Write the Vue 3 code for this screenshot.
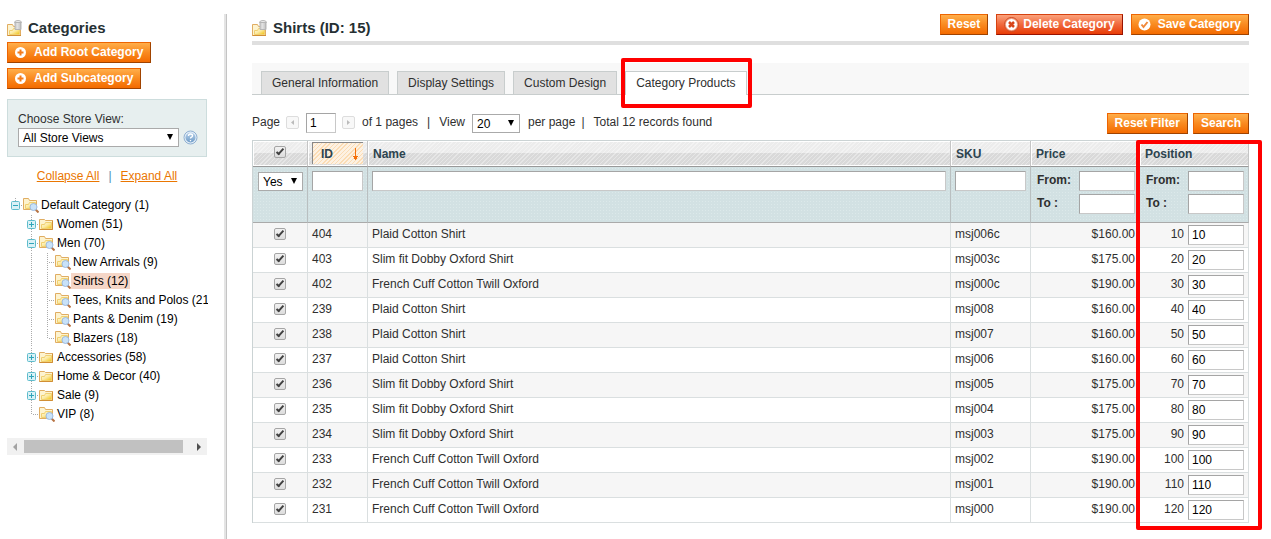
<script setup>
import { ref } from 'vue'

const tree = [
  { name: 'Default Category (1)', level: 0, icon: 'search', toggle: 'minus', root: true },
  { name: 'Women (51)', level: 1, icon: 'folder', toggle: 'plus' },
  { name: 'Men (70)', level: 1, icon: 'search', toggle: 'minus' },
  { name: 'New Arrivals (9)', level: 2, icon: 'search' },
  { name: 'Shirts (12)', level: 2, icon: 'search', selected: true },
  { name: 'Tees, Knits and Polos (21)', level: 2, icon: 'search' },
  { name: 'Pants & Denim (19)', level: 2, icon: 'search' },
  { name: 'Blazers (18)', level: 2, icon: 'search', last: true },
  { name: 'Accessories (58)', level: 1, icon: 'folder', toggle: 'plus' },
  { name: 'Home & Decor (40)', level: 1, icon: 'folder', toggle: 'plus' },
  { name: 'Sale (9)', level: 1, icon: 'folder', toggle: 'plus' },
  { name: 'VIP (8)', level: 1, icon: 'search', last: true }
]

const tabs = ['General Information', 'Display Settings', 'Custom Design', 'Category Products']
const activeTab = ref('Category Products')

const products = ref([
  { id: 404, name: 'Plaid Cotton Shirt', sku: 'msj006c', price: '$160.00', position: 10 },
  { id: 403, name: 'Slim fit Dobby Oxford Shirt', sku: 'msj003c', price: '$175.00', position: 20 },
  { id: 402, name: 'French Cuff Cotton Twill Oxford', sku: 'msj000c', price: '$190.00', position: 30 },
  { id: 239, name: 'Plaid Cotton Shirt', sku: 'msj008', price: '$160.00', position: 40 },
  { id: 238, name: 'Plaid Cotton Shirt', sku: 'msj007', price: '$160.00', position: 50 },
  { id: 237, name: 'Plaid Cotton Shirt', sku: 'msj006', price: '$160.00', position: 60 },
  { id: 236, name: 'Slim fit Dobby Oxford Shirt', sku: 'msj005', price: '$175.00', position: 70 },
  { id: 235, name: 'Slim fit Dobby Oxford Shirt', sku: 'msj004', price: '$175.00', position: 80 },
  { id: 234, name: 'Slim fit Dobby Oxford Shirt', sku: 'msj003', price: '$175.00', position: 90 },
  { id: 233, name: 'French Cuff Cotton Twill Oxford', sku: 'msj002', price: '$190.00', position: 100 },
  { id: 232, name: 'French Cuff Cotton Twill Oxford', sku: 'msj001', price: '$190.00', position: 110 },
  { id: 231, name: 'French Cuff Cotton Twill Oxford', sku: 'msj000', price: '$190.00', position: 120 }
])
</script>

<template>
  <div class="page">
    <svg class="defs" width="0" height="0" aria-hidden="true">
      <defs>
        <linearGradient id="gold" x1="0" y1="0" x2="1" y2="1">
          <stop offset="0" stop-color="#fffbe8" />
          <stop offset="0.5" stop-color="#fbe9a0" />
          <stop offset="1" stop-color="#f0c20c" />
        </linearGradient>
        <linearGradient id="can" x1="0" y1="0" x2="1" y2="0">
          <stop offset="0" stop-color="#c4c4c4" />
          <stop offset="0.4" stop-color="#f4f4f4" />
          <stop offset="1" stop-color="#b0b0b0" />
        </linearGradient>
        <linearGradient id="help" x1="0" y1="0" x2="0" y2="1">
          <stop offset="0" stop-color="#b9d2ea" />
          <stop offset="1" stop-color="#6f9cc8" />
        </linearGradient>
        <symbol id="folder" viewBox="0 0 16 15">
          <path d="M.5 12.500v-10h5l1 1h7v9z" fill="#fdf3cf" stroke="#e0ad62" />
          <path d="M2.500 11.500v-4h3l1-2h6v6z" fill="url(#gold)" stroke="#f0d070" />
          <path d="M.5 12.500h13v-9" fill="none" stroke="#d18f35" />
        </symbol>
        <symbol id="folder-search" viewBox="0 0 16 15">
          <path d="M.5 11.500v-11h5l1 2h7v9z" fill="#fdf3cf" stroke="#e0ad62" />
          <path d="M2.500 10.500v-4h3l1-2h6v6z" fill="url(#gold)" stroke="#f0d070" />
          <path d="M12.500 11.500l3 3" stroke="#b87545" stroke-width="2" />
          <circle cx="10.500" cy="9" r="3.500" fill="#c9e2f8" stroke="#9dbbe0" />
        </symbol>
        <symbol id="title-folder" viewBox="0 0 16 16">
          <path d="M.5 15.500v-11h5l1 2h7v9z" fill="#fdf3cf" stroke="#e0ad62" />
          <path d="M2.500 14.500v-4h3l1-2h6v6z" fill="url(#gold)" stroke="#f0d070" />
          <path d="M.5 15.500h13.500" stroke="#d18f35" />
          <path d="M8 2v7.500h6V2z" fill="url(#can)" stroke="#b5b5b5" />
          <path d="M10 3v6M12 3v6" stroke="#cfcfcf" />
          <path d="M7.500 2.500q0-2 3.500-2t3.500 2z" fill="#eee" stroke="#b5b5b5" />
        </symbol>
        <symbol id="plus-circle" viewBox="0 0 13 13">
          <circle cx="6.500" cy="6.500" r="5.500" fill="#fff" />
          <path d="M6.500 3.500v6M3.500 6.500h6" stroke="#f47b1b" stroke-width="2" />
        </symbol>
      </defs>
    </svg>

    <aside class="sidebar">
      <h3 class="heading">
        <svg class="title-icon" aria-hidden="true"><use href="#title-folder" /></svg>
        Categories
      </h3>
      <div class="stack">
        <button type="button" class="btn">
          <svg class="btn-icon plus" aria-hidden="true"><use href="#plus-circle" /></svg>Add Root Category
        </button>
        <button type="button" class="btn">
          <svg class="btn-icon plus" aria-hidden="true"><use href="#plus-circle" /></svg>Add Subcategory
        </button>
      </div>

      <div class="store">
        <label for="store-view">Choose Store View:</label>
        <div class="store-row">
          <span class="select grow">
            <select id="store-view"><option>All Store Views</option></select>
          </span>
          <svg class="help-icon" viewBox="0 0 15 15" aria-hidden="true">
            <circle cx="7.500" cy="7.500" r="6.500" fill="#e6eff8" stroke="#8fb0d2" />
            <circle cx="7.500" cy="7.500" r="5" fill="url(#help)" />
            <path d="M5.500 6q0-2 2-2t2 1.700q0 1-1 1.500t-1 1.400M7.500 10v1.300" fill="none" stroke="#fff" stroke-width="1.300" />
          </svg>
        </div>
      </div>

      <div class="tree-actions">
        <a href="#">Collapse All</a><span class="bar">|</span><a href="#">Expand All</a>
      </div>

      <ul class="tree">
        <li v-for="node in tree" :key="node.name" class="node">
          <span v-for="n in node.level" :key="n" class="cell" :class="{ 'v-line': node.level === 2 && n === 2 }"></span>
          <span class="cell" :class="node.root ? 'stub' : node.last ? 'elbow-end' : 'elbow'">
            <svg v-if="node.toggle" class="toggle" viewBox="0 0 9 9" aria-hidden="true">
              <rect x=".5" y=".5" width="8" height="8" rx="1" fill="#d9f1f6" stroke="#5fbccc" />
              <path :d="node.toggle === 'plus' ? 'M2 4.500h5M4.500 2v5' : 'M2 4.500h5'" stroke="#2fa5ba" />
            </svg>
          </span>
          <svg class="folder-icon" aria-hidden="true">
            <use :href="node.icon === 'search' ? '#folder-search' : '#folder'" />
          </svg>
          <span class="node-name" :class="{ selected: node.selected }">{{ node.name }}</span>
        </li>
      </ul>

      <div class="scrollbar" aria-hidden="true">
        <span class="arrow-left"></span>
        <span class="thumb"></span>
        <span class="arrow-right"></span>
      </div>
    </aside>

    <main class="main">
      <header class="content-header">
        <h3 class="heading">
          <svg class="title-icon" aria-hidden="true"><use href="#title-folder" /></svg>
          Shirts (ID: 15)
        </h3>
        <div class="header-buttons">
          <button type="button" class="btn">Reset</button>
          <button type="button" class="btn delete">
            <svg class="btn-icon cross" viewBox="0 0 15 15" aria-hidden="true">
              <circle cx="7.500" cy="7.500" r="7" fill="#f3a184" stroke="#cf4a20" />
              <circle cx="7.500" cy="7.500" r="5.500" fill="#fff" />
              <path d="M5 5l5 5M10 5l-5 5" stroke="#d8451a" stroke-width="2.500" />
            </svg>Delete Category
          </button>
          <button type="button" class="btn">
            <svg class="btn-icon check" viewBox="0 0 13 13" aria-hidden="true">
              <circle cx="6.500" cy="6.500" r="6" fill="#fff" />
              <path d="M3.500 6.500l2 2.500 4-5" fill="none" stroke="#f08a3c" stroke-width="2" />
            </svg>Save Category
          </button>
        </div>
      </header>

      <nav class="tabs">
        <div v-for="tab in tabs" :key="tab" class="tab-slot">
          <button type="button" class="tab" :class="{ active: tab === activeTab }" @click="activeTab = tab">{{ tab }}</button>
          <span v-if="tab === 'Category Products'" class="mark tab-mark"></span>
        </div>
      </nav>

      <div class="toolbar">
        <label for="page-no">Page</label>
        <button type="button" class="step" aria-label="Previous page">
          <svg viewBox="0 0 11 11" aria-hidden="true"><path d="M7 3v5L4 5.500z" fill="#bbb" /></svg>
        </button>
        <input id="page-no" class="field page-field" type="text" value="1" />
        <button type="button" class="step" aria-label="Next page">
          <svg viewBox="0 0 11 11" aria-hidden="true"><path d="M4 3v5l3-2.500z" fill="#bbb" /></svg>
        </button>
        <span>of 1 pages</span>
        <span class="sep">|</span>
        <label for="per-page">View</label>
        <span class="select per-page">
          <select id="per-page"><option>20</option></select>
        </span>
        <span class="after-select">per page</span>
        <span>|</span>
        <span class="total">Total 12 records found</span>
        <div class="toolbar-buttons">
          <button type="button" class="btn">Reset Filter</button>
          <button type="button" class="btn">Search</button>
        </div>
      </div>

      <div class="grid-wrap">
        <table class="grid">
          <colgroup>
            <col class="c-check" />
            <col class="c-id" />
            <col />
            <col class="c-sku" />
            <col class="c-num" />
            <col class="c-num" />
          </colgroup>
          <thead>
            <tr class="head">
              <th class="center"><input type="checkbox" class="tick" checked aria-label="Select all" /></th>
              <th class="sorted">
                <span class="sort">
                  ID
                  <svg class="sort-arrow" viewBox="0 0 7 12" aria-hidden="true">
                    <path d="M3 0h1v12H3z M1 8h5v1H1z M2 9h3v2H2z" fill="#f5700a" />
                  </svg>
                </span>
              </th>
              <th>Name</th>
              <th>SKU</th>
              <th>Price</th>
              <th>Position</th>
            </tr>
            <tr class="filter">
              <td class="any">
                <span class="select yes-select">
                  <select aria-label="In category"><option>Yes</option></select>
                </span>
              </td>
              <td><input class="field" type="text" aria-label="Filter ID" /></td>
              <td><input class="field" type="text" aria-label="Filter name" /></td>
              <td><input class="field" type="text" aria-label="Filter SKU" /></td>
              <td v-for="key in ['price', 'position']" :key="key">
                <div class="range">
                  <label :for="key + '-from'">From:</label>
                  <input :id="key + '-from'" class="field num" type="text" />
                </div>
                <div class="range">
                  <label :for="key + '-to'">To :</label>
                  <input :id="key + '-to'" class="field num" type="text" />
                </div>
              </td>
            </tr>
          </thead>
          <tbody>
            <tr v-for="p in products" :key="p.id">
              <td class="center"><input type="checkbox" class="tick" checked :aria-label="'Select ' + p.id" /></td>
              <td>{{ p.id }}</td>
              <td>{{ p.name }}</td>
              <td>{{ p.sku }}</td>
              <td class="money">{{ p.price }}</td>
              <td class="position">
                <div class="pos">
                  <label :for="'pos-' + p.id">{{ p.position }}</label>
                  <input :id="'pos-' + p.id" class="field num" type="text" :value="p.position" />
                </div>
              </td>
            </tr>
          </tbody>
        </table>
        <span class="mark column-mark"></span>
      </div>
    </main>
  </div>
</template>

<style>
body {
  margin: 0;
  background: #fff;
}
</style>

<style scoped>
.page {
  display: flex;
  box-sizing: border-box;
  min-height: 100vh;
  padding: 14px 22px 0 7px;
  font: 12px/16px "Liberation Sans", Arial, sans-serif;
  color: #2f2f2f;
}
.page *,
.page *::before,
.page *::after {
  box-sizing: border-box;
}
.defs {
  position: absolute;
}
button,
input,
select {
  margin: 0;
  font: inherit;
  color: inherit;
}

/* sidebar */
.sidebar {
  flex: 0 0 220px;
  min-width: 0;
  padding-right: 19px;
  border-right: 1px solid #c4c4c4;
  box-shadow: inset -2px 0 #e4e4e4;
}
.heading {
  display: flex;
  align-items: center;
  gap: 5px;
  height: 28px;
  margin: 0;
  font-size: 15px;
  font-weight: bold;
  color: #253033;
  white-space: nowrap;
}
.title-icon {
  width: 16px;
  height: 16px;
  flex: none;
}
.stack {
  display: flex;
  flex-direction: column;
  align-items: flex-start;
  gap: 5px;
}
.btn {
  display: flex;
  align-items: center;
  height: 21px;
  padding: 0 7px 2px;
  border: 1px solid;
  border-color: #ed6502 #a04300 #a04300 #ed6502;
  background: linear-gradient(#ffae4a, #f98a20 50%, #f46b00);
  color: #fff;
  font-weight: bold;
  white-space: nowrap;
  cursor: pointer;
}
.btn.delete {
  border-color: #d64210 #991300 #991300 #d64210;
  background: linear-gradient(#fba27c, #f0683c 50%, #e83c06);
}
.btn-icon {
  flex: none;
  width: 13px;
  height: 13px;
  margin-top: 2px;
}
.plus {
  margin-right: 7px;
  margin-left: -1px;
}
.cross {
  width: 15px;
  height: 15px;
  margin-right: 4px;
}
.check {
  margin-left: -1px;
  margin-right: 7px;
}

.store {
  margin-top: 10px;
  padding: 11px 8px 9px 10px;
  border: 1px solid #cddddd;
  background: #e7efef;
}
.store label {
  display: block;
  height: 17px;
}
.store-row {
  display: flex;
  align-items: center;
  gap: 4px;
}
.grow {
  flex: 1;
}
.help-icon {
  width: 15px;
  height: 15px;
}
.select {
  position: relative;
  display: inline-block;
  height: 19px;
}
.select select {
  display: block;
  width: 100%;
  height: 19px;
  padding: 0 4px;
  border: 1px solid #aaa;
  border-radius: 0;
  background: #fff;
  color: #000;
  appearance: none;
}
.select::after {
  content: "";
  position: absolute;
  right: 6px;
  top: 6px;
  border: solid transparent;
  border-width: 6px 3px 0;
  border-top-color: #000;
  pointer-events: none;
}
.tree-actions {
  display: flex;
  justify-content: center;
  margin: 11px 0;
}
.tree-actions a {
  color: #ea7601;
}
.bar {
  margin: 0 9px;
  color: #4b8fb5;
}

.tree {
  margin: 0 -1px 0 0;
  padding: 0;
  list-style: none;
  overflow: hidden;
  color: #000;
}
.node {
  display: flex;
  align-items: center;
  height: 19px;
  white-space: nowrap;
}
.cell {
  position: relative;
  flex: 0 0 16px;
  height: 19px;
}
.v-line::before,
.elbow::before,
.elbow-end::before,
.stub::before {
  content: "";
  position: absolute;
  left: 8px;
  top: 0;
  width: 1px;
  height: 19px;
  background: repeating-linear-gradient(#fff 0 1px, #aaa 1px 2px);
}
.elbow-end::before {
  height: 11px;
}
.stub::before {
  top: 2px;
  height: 4px;
}
.elbow::after,
.elbow-end::after,
.stub::after {
  content: "";
  position: absolute;
  left: 9px;
  top: 10px;
  width: 6px;
  height: 1px;
  background: repeating-linear-gradient(90deg, #fff 0 1px, #aaa 1px 2px);
}
.toggle {
  position: absolute;
  z-index: 1;
  left: 4px;
  top: 6px;
  width: 9px;
  height: 9px;
}
.folder-icon {
  flex: none;
  width: 16px;
  height: 15px;
  margin-top: 2px;
}
.node-name {
  padding: 0 2px;
}
.node-name.selected {
  background: #f5d6c7;
}
.scrollbar {
  display: flex;
  align-items: center;
  justify-content: space-between;
  height: 17px;
  margin-top: 15px;
  padding: 0 6px;
  background: #f1f1f1;
}
.thumb {
  flex: 1;
  height: 13px;
  margin: 0 14px 0 7px;
  background: #c1c1c1;
}
.arrow-left,
.arrow-right {
  border: solid transparent;
}
.arrow-left {
  border-width: 4px 4px 4px 0;
  border-right-color: #a3a3a3;
}
.arrow-right {
  border-width: 4px 0 4px 4px;
  border-left-color: #505050;
}

/* content */
.main {
  flex: 1;
  min-width: 0;
  padding-left: 25px;
}
.content-header {
  display: flex;
  justify-content: space-between;
  align-items: flex-start;
  height: 31px;
  border-bottom: 4px solid #dfdfdf;
}
.header-buttons {
  display: flex;
  gap: 8px;
}
.tabs {
  display: flex;
  gap: 8px;
  height: 32px;
  margin-top: 18px;
  padding: 8px 9px 0;
  border-bottom: 1px solid #c8cdcd;
  background: #f8f8f8;
}
.tab-slot {
  position: relative;
}
.tab {
  height: 23px;
  padding: 0 10px;
  border: 1px solid #c8cdcd;
  border-bottom: 0;
  background: #e1e1e1;
  white-space: nowrap;
  cursor: pointer;
}
.tab.active {
  height: 24px;
  padding-bottom: 1px;
  background: #fff;
}
.mark {
  position: absolute;
  z-index: 2;
  border: 4px solid #f00;
  border-radius: 2px;
  pointer-events: none;
}
.tab-mark {
  inset: -13px -5px -14px -4px;
}
.toolbar {
  display: flex;
  align-items: center;
  height: 21px;
  margin: 18px 0 6px;
  white-space: nowrap;
}
.toolbar > label,
.toolbar > span:not(.select) {
  margin-bottom: 3px;
}
.step {
  width: 13px;
  height: 13px;
  margin: 0 7px 2px 6px;
  padding: 0;
  border: 1px solid #ddd;
  border-radius: 2px;
  background: #f8f8f8;
}
.step svg {
  display: block;
  width: 11px;
  height: 11px;
}
.field {
  display: block;
  width: 100%;
  height: 20px;
  padding: 1px 2px 0 3px;
  border: 1px solid;
  border-color: #a5a5a5 #c8c8c8 #c8c8c8 #a5a5a5;
  border-radius: 0;
  background: #fff;
  color: #000;
}
.page-field {
  width: 30px;
  margin-bottom: 1px;
  padding-top: 0;
}
.sep {
  margin: 0 9px;
}
.per-page {
  width: 48px;
  margin-left: 7px;
}
.after-select {
  margin: 0 6px 0 8px;
}
.total {
  margin-left: 9px;
}
.toolbar-buttons {
  display: flex;
  gap: 5px;
  margin-left: auto;
}

/* grid */
.grid-wrap {
  position: relative;
}
.grid {
  width: 100%;
  table-layout: fixed;
  border-collapse: separate;
  border-spacing: 0;
  border: solid #cbd3d4;
  border-width: 1px 0 0 1px;
}
.c-check {
  width: 55px;
}
.c-id {
  width: 60px;
}
.c-sku {
  width: 80px;
}
.c-num {
  width: 109px;
}
.grid th,
.grid td {
  text-align: left;
  vertical-align: top;
  border: solid #dadfe0;
  border-width: 0 1px 1px 0;
}
.grid th {
  height: 26px;
  padding: 5px 5px 4px;
  border-color: #999 #c5c5c5 #999 #c5c5c5;
  background:
    repeating-linear-gradient(135deg, rgba(255, 255, 255, 0.35) 0 1px, rgba(255, 255, 255, 0) 1px 3px),
    linear-gradient(#ececec 50%, #d9d9d9 50%);
  box-shadow: inset 1px 1px #fff, inset 0 -1px #fff;
  color: #2d444f;
  font-weight: bold;
}
.grid th.sorted {
  padding: 1px 4px;
}
.sort {
  display: flex;
  align-items: center;
  justify-content: space-between;
  height: 22px;
  padding: 0 4px 0 8px;
  border: solid #888;
  border-width: 1px 0 0 1px;
  background: repeating-linear-gradient(135deg, #fbdcb4 0 1px, #fdf1e2 1px 3px);
}
.sort-arrow {
  width: 7px;
  height: 12px;
}
.grid .filter td {
  height: 56px;
  padding: 4px 4px 0;
  border-color: #aaa #b9bfc0 #aaa #b9bfc0;
  background-color: #d2e1e3;
  background-image: radial-gradient(#dce9ea 1px, transparent 1px);
  background-size: 3px 3px;
}
.grid .filter .any {
  padding: 5px 4px 0 5px;
}
.yes-select {
  display: block;
  width: 45px;
}
.range {
  display: flex;
  justify-content: space-between;
  height: 20px;
  margin: 0 0 3px 2px;
}
.range label {
  padding-top: 1px;
  font-weight: bold;
}
.num {
  width: 56px;
}
.range .num {
  flex: none;
}
tbody td {
  height: 25px;
  padding: 3px 4px 0;
}
tbody tr:nth-child(odd) td {
  background: #f6f6f6;
}
tbody .money {
  text-align: right;
}
tbody .position {
  padding: 2px 4px 0;
}
.pos {
  display: flex;
  justify-content: flex-end;
  gap: 4px;
}
.pos label {
  padding-top: 1px;
}
.pos .field {
  padding-top: 0;
}
.grid .center {
  text-align: center;
}
.tick {
  position: relative;
  display: block;
  width: 12px;
  height: 12px;
  margin: 0 auto;
  border: 1px solid #a5a5a5;
  border-radius: 2px;
  background: linear-gradient(#f2f2f2, #dcdcdc);
  appearance: none;
}
tbody .tick {
  margin-top: 2px;
}
.tick:checked::after {
  content: "";
  position: absolute;
  left: 3px;
  top: 0;
  width: 4px;
  height: 8px;
  border: solid #404040;
  border-width: 0 2px 2px 0;
  transform: rotate(42deg);
}
.column-mark {
  top: 0;
  right: -13px;
  bottom: -7px;
  width: 126px;
}
</style>
